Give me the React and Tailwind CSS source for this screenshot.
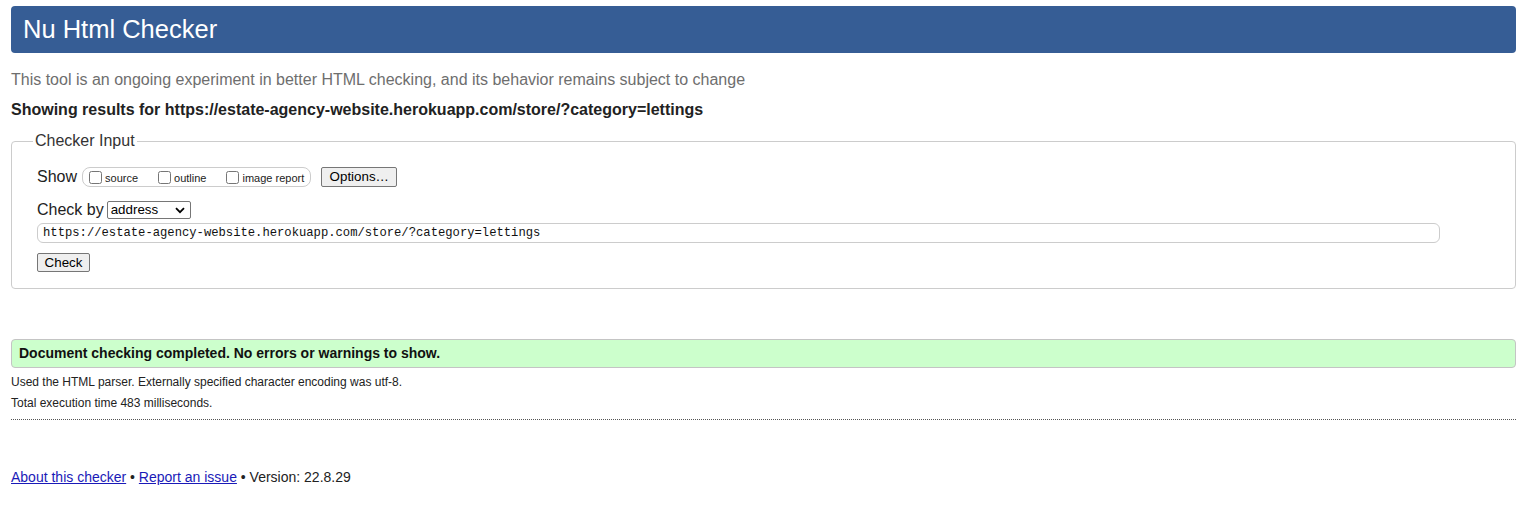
import React from "react";

const F = { fontFamily: '"Liberation Sans", Arial, sans-serif' };

export default function App() {
  return (
    <div className="min-h-[506px] bg-white px-[11px] pt-[6px] text-[#222]" style={F}>
      <header className="flex h-[47px] items-center rounded-[4px] bg-[#365d95] px-[12px]">
        <h1 className="text-[25.5px] font-normal leading-none text-white">Nu Html Checker</h1>
      </header>

      <p className="mt-[18px] text-[16px] leading-[18px] text-[#6e6e6e]">
        This tool is an ongoing experiment in better HTML checking, and its behavior remains subject to change
      </p>
      <p className="mt-[12px] text-[16px] font-bold leading-[18px] text-[#222]">
        Showing results for https://estate-agency-website.herokuapp.com/store/?category=lettings
      </p>

      <fieldset className="mt-[13px] rounded-[4px] border border-[#ccc] px-[25px] pb-[16px]">
        <legend className="-ml-[4px] px-[2px] text-[16px] leading-[18px] text-[#333]">Checker Input</legend>

        <div className="mt-[17px] flex h-[20px] items-center">
          <span className="text-[16px] leading-[18px] text-[#222]">Show</span>
          <div className="ml-[5px] flex h-[20px] items-center rounded-[8px] border border-[#ccc] pr-[6px] text-[11px] text-[#222]">
            <input type="checkbox" className="ml-[6px] h-[13px] w-[13px]" />
            <span className="ml-[3px] mt-[2px]">source</span>
            <input type="checkbox" className="ml-[20px] h-[13px] w-[13px]" />
            <span className="ml-[3px] mt-[2px]">outline</span>
            <input type="checkbox" className="ml-[20px] h-[13px] w-[13px]" />
            <span className="ml-[3px] mt-[2px]">image report</span>
          </div>
          <button className="ml-[10px] flex h-[20px] w-[76px] items-center justify-center rounded-[2px] border border-[#767676] bg-[#efefef] text-[13.33px] text-black">
            Options…
          </button>
        </div>

        <div className="mt-[14px] flex h-[18px] items-center">
          <span className="text-[16px] leading-[18px] text-[#222]">Check by</span>
          <div className="relative ml-[3px] h-[18px] w-[84px]">
            <div className="flex h-[18px] w-[84px] items-center rounded-[2px] border border-[#767676] bg-white pl-[3px] text-[13.33px] leading-none text-black">
              address
            </div>
            <svg
              className="pointer-events-none absolute right-[6px] top-[6px]"
              width="10"
              height="7"
              viewBox="0 0 10 7"
            >
              <path d="M1 1.2 L5 5.2 L9 1.2" fill="none" stroke="#000" strokeWidth="1.8" />
            </svg>
          </div>
        </div>

        <div className="mt-[4px] flex h-[20px] w-[1403px] items-center rounded-[6px] border border-[#ccc] px-[5px]">
          <span
            className="mt-[1px] text-[12.2px] leading-none text-[#111]"
            style={{ fontFamily: '"Liberation Mono", "Courier New", monospace' }}
          >
            https://estate-agency-website.herokuapp.com/store/?category=lettings
          </span>
        </div>

        <button className="mt-[10px] flex h-[19px] w-[53px] items-center justify-center rounded-[2px] border border-[#767676] bg-[#efefef] text-[13.33px] text-black">
          Check
        </button>
      </fieldset>

      <div className="mt-[50px] flex h-[29px] items-center rounded-[4px] border border-[#c4c4c4] bg-[#ccffcc] px-[7px]">
        <span className="text-[14px] font-bold text-[#111]">
          Document checking completed. No errors or warnings to show.
        </span>
      </div>

      <p className="mt-[7px] text-[12px] leading-[14px] text-[#222]">
        Used the HTML parser. Externally specified character encoding was utf-8.
      </p>
      <p className="mt-[7px] text-[12px] leading-[14px] text-[#222]">Total execution time 483 milliseconds.</p>

      <div className="mt-[9px] border-t border-dotted border-[#555]" />

      <p className="mt-[49px] text-[14px] leading-[16px] text-[#222]">
        <a href="#" className="text-[#1a1ab8] underline">About this checker</a>
        {" • "}
        <a href="#" className="text-[#1a1ab8] underline">Report an issue</a>
        {" • Version: 22.8.29"}
      </p>
    </div>
  );
}
